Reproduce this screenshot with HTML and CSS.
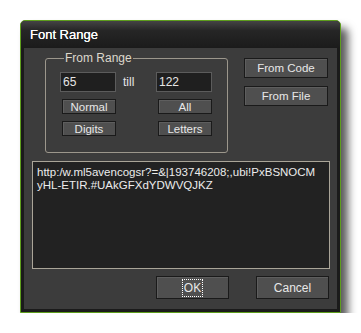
FILE: index.html
```html
<!DOCTYPE html>
<html lang="en">

<head>
  <meta charset="UTF-8" />
  <title>Font Range</title>
  <link rel="stylesheet" href="styles.css">
</head>

<body>

  <div class="window">
    <div class="title-bar">Font Range</div>

    <div class="content">
      <!-- range box + side buttons -->
      <div class="top-row">
        <fieldset class="range-box">
          <legend>From Range</legend>
          <div class="range-grid">
            <input class="field" type="text" value="65" />
            <span class="till">till</span>
            <input class="field" type="text" value="122" />
            <button class="btn small">Normal</button>
            <span></span>
            <button class="btn small">All</button>
            <button class="btn small">Digits</button>
            <span></span>
            <button class="btn small">Letters</button>
          </div>
        </fieldset>

        <div class="side-buttons">
          <button class="btn side">From Code</button>
          <button class="btn side">From File</button>
        </div>
      </div>

      <div class="chars">http:/w.ml5avencogsr?=&amp;|193746208;,ubi!PxBSNOCM<br>yHL-ETIR.#UAkGFXdYDWVQJKZ</div>

      <div class="bottom-row">
        <button class="btn dialog"><span class="focus">OK</span></button>
        <button class="btn dialog">Cancel</button>
      </div>
    </div>
  </div>

</body>

</html>
```

FILE: styles.css
```css
* {
  margin: 0;
  padding: 0;
  box-sizing: border-box;
  font-family: Tahoma, 'Liberation Sans', sans-serif;
}

body {
  background-color: #fff;
  padding: 20px 0 0 20px;
}

/* Dialog window */
.window {
  width: 321px;
  height: 293px;
  border: 1px solid #5e9e1c;
  border-radius: 5px 5px 0 0;
  background-color: #1b1b1b;
  padding: 0 3px 3px 3px;
  box-shadow: 7px 8px 9px rgba(0, 0, 0, 0.65);
  display: flex;
  flex-direction: column;
}

.title-bar {
  height: 27px;
  margin: 0 -3px;
  padding: 6px 0 0 9px;
  border-radius: 4px 4px 0 0;
  background: linear-gradient(#444 0%, #262626 35%, #1b1b1b 100%);
  color: #fff;
  font-size: 13px;
  text-shadow: 0 0 0.4px #fff;
}

.content {
  flex: 1;
  background-color: #3c3c3c;
  padding: 9px 7px 0 8px;
}

.top-row {
  display: flex;
  align-items: flex-start;
}

/* From Range group */
.range-box {
  margin-left: 13px;
  width: 183px;
  border: 1px solid #9c978c;
  border-radius: 3px;
  padding: 0 0 0 14px;
  position: relative;
  top: -6px;
  height: 102px;
}

.range-box legend {
  color: #ddd8cc;
  font-size: 12px;
  padding: 0 1px;
  margin-left: 4px;
}

.range-grid {
  display: grid;
  grid-template-columns: 56px 40px 56px;
  grid-template-rows: 20px 15px 15px;
  row-gap: 7px;
  margin-top: 7px;
  align-items: center;
}

.range-grid .btn {
  justify-self: center;
  width: 54px;
  margin-left: 2px;
}

.field {
  width: 56px;
  height: 20px;
  background-color: #1f1f1f;
  border: 1px solid #5c5c5c;
  color: #e6e6e6;
  font-size: 12px;
  padding: 0 2px;
  outline: none;
}

.till {
  color: #e6e6e6;
  font-size: 12px;
  padding-left: 7px;
}

/* Buttons */
.btn {
  background-color: #4f4f4f;
  border: 1px solid #1a1a1a;
  box-shadow: inset 1px 1px 0 #5e5e5e;
  color: #e8e8e8;
  font-size: 11.5px;
  cursor: pointer;
}

.btn.small {
  height: 15px;
  line-height: 12px;
}

.side-buttons {
  margin-left: 16px;
  margin-top: 1px;
  display: flex;
  flex-direction: column;
  gap: 8px;
}

.btn.side {
  width: 84px;
  height: 20px;
}

/* character list */
.chars {
  margin-top: 2px;
  width: 298px;
  height: 108px;
  background-color: #222;
  border: 1px solid #aaa598;
  color: #ececec;
  font-size: 11.5px;
  line-height: 13px;
  padding: 4px 4px;
  white-space: nowrap;
  overflow: hidden;
}

.bottom-row {
  display: flex;
  justify-content: flex-end;
  gap: 27px;
  margin-top: 7px;
  padding-right: 1px;
}

.btn.dialog {
  width: 73px;
  height: 23px;
  font-size: 12px;
}

.focus {
  border: 1px dotted #fff;
  padding: 1px 1px;
}
```
